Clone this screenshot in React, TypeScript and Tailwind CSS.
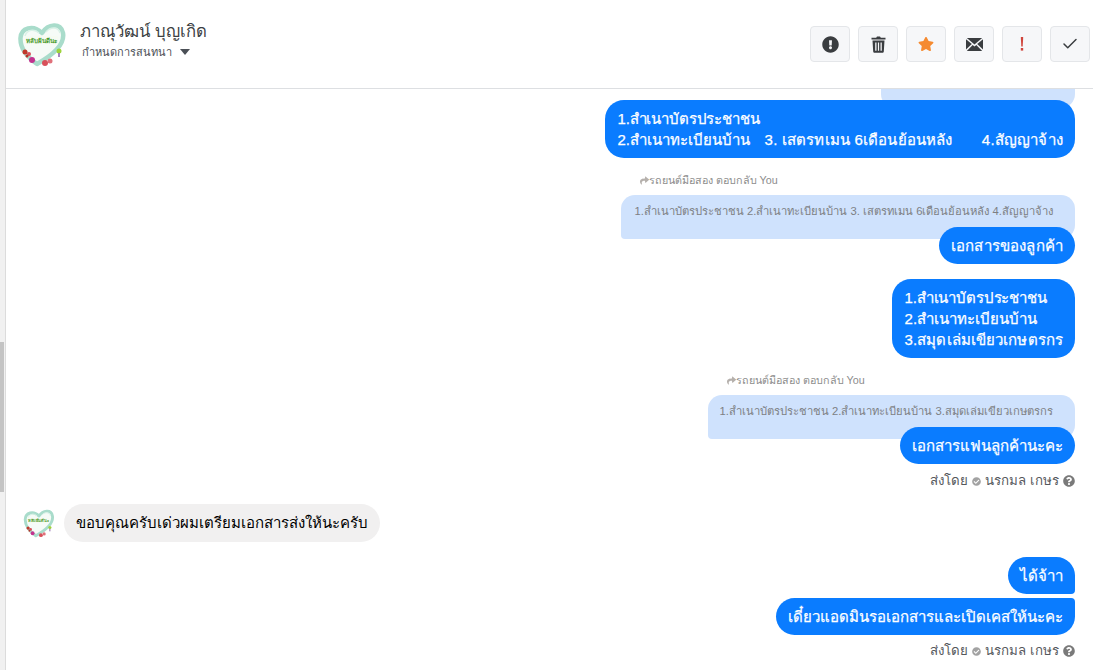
import React from 'react';
import { FaExclamationCircle, FaStar, FaQuestionCircle, FaShare, FaCheckCircle } from 'react-icons/fa';
import { LuCheck } from 'react-icons/lu';

const Logo: React.FC<{ size: number }> = ({ size }) => (
  <svg width={size} height={size} viewBox="0 0 50 50" className="shrink-0">
    <path d="M20 45C10 38 3 30 3.500 19 4 9 16 5 25 14 31 5 44 3 46 14 48 25 36 36 20 45Z" fill="#f6fbf7" stroke="#a9dccb" strokeWidth="4.500" strokeLinejoin="round" />
    <path d="M8 17C10 11 17 9 22 14" fill="none" stroke="#d9f1e7" strokeWidth="1.500" />
    <path d="M29 13C33 8 41 7 43 14" fill="none" stroke="#d9f1e7" strokeWidth="1.500" />
    <rect x="8" y="17" width="33" height="8" fill="#f6fbf2" />
    <text x="24.500" y="23.500" textAnchor="middle" fontSize="6.200" fontWeight="700" fill="#4a9a2d">หลับฝันดีนะ</text>
    <circle cx="8" cy="33" r="2.500" fill="#c0392b" />
    <circle cx="12" cy="35" r="2" fill="#d8505a" />
    <circle cx="10" cy="37" r="1.500" fill="#b8352a" />
    <circle cx="15" cy="41" r="3" fill="#c2338f" />
    <circle cx="28" cy="44" r="3" fill="#d8505a" />
    <circle cx="33" cy="42" r="2.500" fill="#e0707a" />
    <circle cx="42" cy="32" r="2.500" fill="#9ed33c" />
    <path d="M42 34V38" stroke="#8a5fa8" strokeWidth="1.500" />
  </svg>
);

const TrashIcon = () => (
  <svg width="15" height="17" viewBox="0 0 15 17" fill="#3a3d40">
    <path d="M5.200 1.800 6 .5H9L9.800 1.800H14.500V3.500H.5V1.800Z" />
    <path fillRule="evenodd" d="M1.500 4.500H13.500L12.800 15.500C12.700 16.400 12.200 16.800 11.500 16.800H3.500C2.800 16.800 2.300 16.400 2.200 15.500ZM4.200 6.500V14.800H5.500V6.500ZM6.900 6.500V14.800H8.100V6.500ZM9.500 6.500V14.800H10.800V6.500Z" />
  </svg>
);

const EnvelopeIcon = () => (
  <svg width="17" height="13" viewBox="0 0 17 13" fill="#3a3d40">
    <path d="M.8 0H16.200L8.500 6.400Z" />
    <path d="M0 1.200V11.600L5.800 6Z" />
    <path d="M17 1.200V11.600L11.200 6Z" />
    <path d="M.8 13H16.200L10.300 7 8.500 8.500 6.700 7Z" />
  </svg>
);

const BangIcon = () => (
  <svg width="4" height="14" viewBox="0 0 4 14" fill="#d0453c">
    <path d="M.8 0H3.200L2.700 9.500H1.300Z" />
    <rect x=".8" y="11" width="2.400" height="2.600" />
  </svg>
);

const ToolButton: React.FC<{ children: React.ReactNode }> = ({ children }) => (
  <button className="w-[40px] h-[36px] flex items-center justify-center rounded-[4px] border border-[#e4e6e9] bg-[#f6f7f9] text-[#3a3d40]">
    {children}
  </button>
);

const Quote: React.FC<{ author: string; text: string; pad: string; bubblePad: string }> = ({ author, text, pad, bubblePad }) => (
  <div className="flex flex-col items-start self-end">
    <div className={`flex items-center text-[10.750px] leading-[14px] text-[#8d8d8d] ${pad}`}>
      <FaShare className="text-[9px] text-[#b5b0ac]" />
      <span>{author} ตอบกลับ You</span>
    </div>
    <div className={`mt-[8px] h-[44px] pr-[22px] pt-[8px] rounded-t-[14px] rounded-br-[14px] rounded-bl-[4px] bg-[#cfe2fd] text-[11.250px] leading-[16px] text-[#7d7f83] ${bubblePad}`}>
      {text}
    </div>
  </div>
);

const Mine: React.FC<{ children: React.ReactNode; className?: string }> = ({ children, className }) => (
  <div className={`self-end pl-[12px] pr-[12px] py-[8px] rounded-[19px] bg-[#0a7cff] text-white text-[15px] leading-[21px] [-webkit-text-stroke:0.25px_white] ${className ?? ''}`}>
    {children}
  </div>
);

const SentBy: React.FC<{ className?: string }> = ({ className }) => (
  <div className={`self-end flex items-center gap-[4px] h-[16px] text-[13.300px] text-[#55585c] ${className ?? ''}`}>
    <span>ส่งโดย</span>
    <FaCheckCircle className="text-[9px] text-[#a2a2a2]" />
    <span>นรกมล เกษร</span>
    <FaQuestionCircle className="text-[12px] text-[#7a7a7a]" />
  </div>
);

export default function App() {
  return (
    <div className="flex h-[670px] w-[1093px] overflow-hidden bg-white font-['Liberation_Sans','Noto_Sans',sans-serif]">
      <div className="w-[6px] shrink-0 flex flex-col bg-[#f1f1f1] border-r border-[#dcdcdc]">
        <div className="h-[342px]" />
        <div className="h-[150px] w-[4px] bg-[#c4c4c4]" />
      </div>
      <div className="flex-1 flex flex-col min-w-0">
        <header className="h-[89px] shrink-0 flex items-center border-b border-[#dddfe2] pl-[11px] pr-[3px]">
          <Logo size={50} />
          <div className="ml-[13px] mb-[7px] flex flex-col">
            <span className="text-[16.700px] leading-[22px] text-[#3c3f43]">ภาณุวัฒน์ บุญเกิด</span>
            <span className="pl-[2px] flex items-center gap-[8px] text-[11px] leading-[18px] text-[#4b4f56]">
              กำหนดการสนทนา
              <span className="w-0 h-0 border-x-[5.500px] border-x-transparent border-t-[6px] border-t-[#4b4f56]" />
            </span>
          </div>
          <div className="ml-auto flex gap-[8px]">
            <ToolButton><FaExclamationCircle className="text-[17px]" /></ToolButton>
            <ToolButton><TrashIcon /></ToolButton>
            <ToolButton><FaStar className="text-[16px] text-[#f58a30]" /></ToolButton>
            <ToolButton><EnvelopeIcon /></ToolButton>
            <ToolButton><BangIcon /></ToolButton>
            <ToolButton><LuCheck className="text-[18px]" /></ToolButton>
          </div>
        </header>
        <main className="flex-1 min-h-0 overflow-hidden flex flex-col pr-[18px]">
          <div className="self-end w-[194px] h-[19px] rounded-b-[14px] bg-[#cfe2fd]" />
          <Mine className="-mt-[8px]">
            <span className="tracking-[-0.15px]">1.สำเนาบัตรประชาชน</span><br />
            2.สำเนาทะเบียนบ้าน&nbsp;&nbsp;
            <span className="ml-[2px] tracking-[0.16px]"> 3. เสตรทเมน 6เดือนย้อนหลัง</span>&nbsp;&nbsp;&nbsp;&nbsp;&nbsp;&nbsp;
            <span className="tracking-[0.18px]"> 4.สัญญาจ้าง</span>
          </Mine>
          <div className="mt-[15px]" />
          <Quote author="รถยนต์มือสอง" text="1.สำเนาบัตรประชาชน 2.สำเนาทะเบียนบ้าน 3. เสตรทเมน 6เดือนย้อนหลัง 4.สัญญาจ้าง" pad="pl-[19px]" bubblePad="pl-[14px]" />
          <Mine className="-mt-[12px] tracking-[0.15px]">เอกสารของลูกค้า</Mine>
          <Mine className="mt-[15px] pl-[13px]">
            <span className="tracking-[-0.15px]">1.สำเนาบัตรประชาชน</span><br />2.สำเนาทะเบียนบ้าน<br /><span className="tracking-[0.1px]">3.สมุดเล่มเขียวเกษตรกร</span>
          </Mine>
          <div className="mt-[15px]" />
          <Quote author="รถยนต์มือสอง" text="1.สำเนาบัตรประชาชน 2.สำเนาทะเบียนบ้าน 3.สมุดเล่มเขียวเกษตรกร" pad="pl-[19px]" bubblePad="pl-[12px]" />
          <Mine className="-mt-[12px] py-[8.500px]">เอกสารแฟนลูกค้านะคะ</Mine>
          <SentBy className="mt-[9px]" />
          <div className="mt-[15px] flex items-center pl-[17px]">
            <Logo size={32} />
            <div className="ml-[9px] px-[12px] py-[8px] rounded-[19px] bg-[#f1f0f0] text-[15px] leading-[22px] text-black">
              ขอบคุณครับเด่วผมเตรียมเอกสารส่งให้นะครับ
            </div>
          </div>
          <Mine className="mt-[15px] py-[8.500px] rounded-br-[4px]">ได้จ้าา</Mine>
          <Mine className="mt-[4px] rounded-tr-[4px]">เดี๋ยวแอดมินรอเอกสารและเปิดเคสให้นะคะ</Mine>
          <SentBy className="mt-[8px]" />
        </main>
      </div>
    </div>
  );
}
